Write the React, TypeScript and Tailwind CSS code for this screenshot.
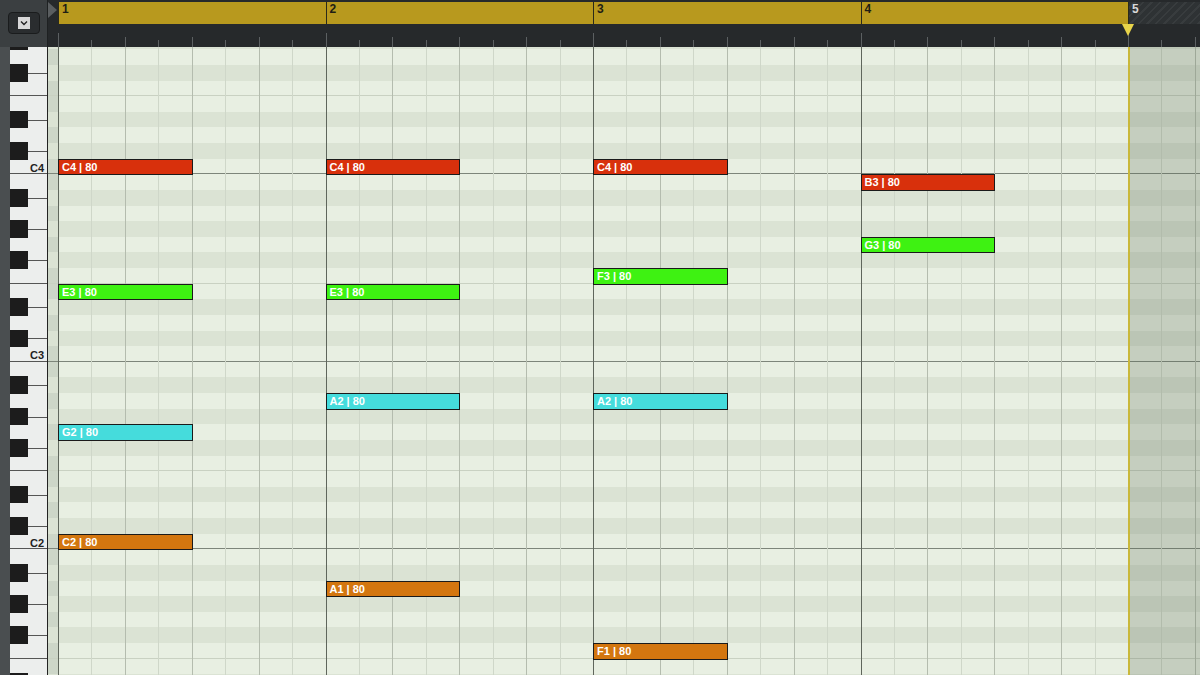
import React from 'react';

const ROW = 15.625;
const TOP = 68; // highest pitch shown
const LOW = 27;
const OFFSET = -13.3;
const X0 = 10; // grid start inside canvas (58 - 48)
const BAR = 267.5;
const BLACK = [1, 3, 6, 8, 10];

const pitches = Array.from({ length: TOP - LOW + 1 }, (_, i) => TOP - i);

const notes = [
  { bar: 0, p: 60, c: 'bg-[#d8300c]', t: 'C4 | 80' },
  { bar: 0, p: 52, c: 'bg-[#3ef212]', t: 'E3 | 80' },
  { bar: 0, p: 43, c: 'bg-[#45dcdc]', t: 'G2 | 80' },
  { bar: 0, p: 36, c: 'bg-[#d3760f]', t: 'C2 | 80' },
  { bar: 1, p: 60, c: 'bg-[#d8300c]', t: 'C4 | 80' },
  { bar: 1, p: 52, c: 'bg-[#3ef212]', t: 'E3 | 80' },
  { bar: 1, p: 45, c: 'bg-[#45dcdc]', t: 'A2 | 80' },
  { bar: 1, p: 33, c: 'bg-[#d3760f]', t: 'A1 | 80' },
  { bar: 2, p: 60, c: 'bg-[#d8300c]', t: 'C4 | 80' },
  { bar: 2, p: 53, c: 'bg-[#3ef212]', t: 'F3 | 80' },
  { bar: 2, p: 45, c: 'bg-[#45dcdc]', t: 'A2 | 80' },
  { bar: 2, p: 29, c: 'bg-[#d3760f]', t: 'F1 | 80' },
  { bar: 3, p: 59, c: 'bg-[#d8300c]', t: 'B3 | 80' },
  { bar: 3, p: 55, c: 'bg-[#3ef212]', t: 'G3 | 80' },
];

const rowY = (p: number) => OFFSET + (TOP - p) * ROW;
const eighths = Array.from({ length: 36 }, (_, i) => i);

export default function App() {
  return (
    <div className="w-[1200px] h-[675px] overflow-hidden bg-[#2b2f31] flex flex-col" style={{ fontFamily: '"Liberation Sans", Arial, sans-serif' }}>
      {/* header */}
      <div className="h-[47px] flex shrink-0">
        <div className="w-[48px] bg-[#3b3f41] border-r border-[#1e2122] flex items-start justify-center pt-[12px]">
          <div className="w-[32px] h-[22px] rounded-[4px] bg-[#2a2d2f] border border-[#1a1c1d] flex items-center justify-center">
            <div className="w-[12px] h-[12px] bg-[#d8d8d8] flex items-center justify-center">
              <svg width="8" height="6" viewBox="0 0 8 6"><path d="M1 1.5 L4 4.5 L7 1.5" stroke="#222" strokeWidth="1.4" fill="none" /></svg>
            </div>
          </div>
        </div>
        <div className="flex-1 relative bg-[#26292b]">
          <div className="absolute left-0 top-[2px] w-0 h-0 border-y-[8px] border-y-transparent border-l-[9px] border-l-[#5a5e60]" />
          <div className="absolute left-[10px] top-[2px] h-[22px] w-[1070px] bg-[#b8991e]" />
          <div className="absolute left-[1080px] top-[2px] h-[22px] w-[80px] bg-[repeating-linear-gradient(135deg,#2e3234_0px,#2e3234_4px,#383c3e_4px,#383c3e_6px)]" />
          {[0, 1, 2, 3, 4].map(b => (
            <div key={b} className="absolute top-[2px] h-[22px] border-l border-[#2a2a1a] pl-[3px] text-[12px] font-bold leading-[14px] text-[#1e1e14]" style={{ left: X0 + b * BAR }}>
              <span className={b === 4 ? 'text-[#d8d8d8]' : ''}>{b + 1}</span>
            </div>
          ))}
          {eighths.map(i => (
            <div key={i} className="absolute bottom-0 w-px bg-[#5c6062]" style={{ left: X0 + i * BAR / 8, height: i % 8 === 0 ? 14 : i % 2 === 0 ? 10 : 7 }} />
          ))}
          <div className="absolute left-[1074px] top-[24px] w-0 h-0 border-x-[6px] border-x-transparent border-t-[12px] border-t-[#e8d44a]" />
        </div>
      </div>

      <div className="flex-1 flex overflow-hidden">
        {/* keyboard */}
        <div className="w-[48px] relative bg-[#4a4e50] border-r border-[#222] overflow-hidden">
          <div className="absolute left-[10px] right-0" style={{ top: OFFSET }}>
            {pitches.map(p => {
              const n = p % 12;
              const black = BLACK.includes(n);
              return (
                <div key={p} className={`relative bg-[#eceeed] ${n === 0 || n === 5 ? 'border-b border-[#555]' : ''}`} style={{ height: ROW }}>
                  {black && <div className="absolute left-0 w-[18px] top-[-1px] bottom-[-1px] bg-[#1c1c1c] z-10" />}
                  {black && <div className="absolute left-[18px] right-0 top-1/2 h-px bg-[#555]" />}
                  {n === 0 && <span className="absolute right-[3px] top-[1px] text-[11px] font-bold text-[#222]">C{p / 12 - 1}</span>}
                </div>
              );
            })}
          </div>
        </div>

        {/* grid */}
        <div className="flex-1 relative bg-[#e8efe2] overflow-hidden">
          <div className="absolute left-0 top-0 bottom-0 w-[10px] bg-[#cdd6c8]" />
          <div className="absolute inset-x-0" style={{ top: OFFSET }}>
            {pitches.map(p => {
              const n = p % 12;
              return (
                <div key={p} className={`${BLACK.includes(n) ? 'bg-[#dbe3d4]' : ''} ${n === 0 ? 'border-b border-[#7d857a]' : n === 5 ? 'border-b border-[#c9d1c2]' : ''}`} style={{ height: ROW }} />
              );
            })}
          </div>
          {eighths.map(i => (
            <div key={i} className={`absolute top-0 bottom-0 w-px ${i % 8 === 0 ? 'bg-[#5f665c]' : i % 2 === 0 ? 'bg-[#b4bcae]' : 'bg-[#cfd7c9]'}`} style={{ left: X0 + i * BAR / 8 }} />
          ))}
          <div className="absolute top-0 bottom-0 left-[1080px] right-0 bg-[#5c6d58]/25" />
          <div className="absolute top-0 bottom-0 left-[1080px] w-[2px] bg-[#c9b83a]" />
          {notes.map((nt, i) => (
            <div key={i} className={`absolute ${nt.c} border border-[#1a1a1a] text-white text-[11px] font-bold leading-[14px] pl-[3px]`} style={{ left: X0 + nt.bar * BAR, top: rowY(nt.p), width: BAR / 2 + 1, height: ROW + 1 }}>
              {nt.t}
            </div>
          ))}
        </div>
      </div>
    </div>
  );
}
